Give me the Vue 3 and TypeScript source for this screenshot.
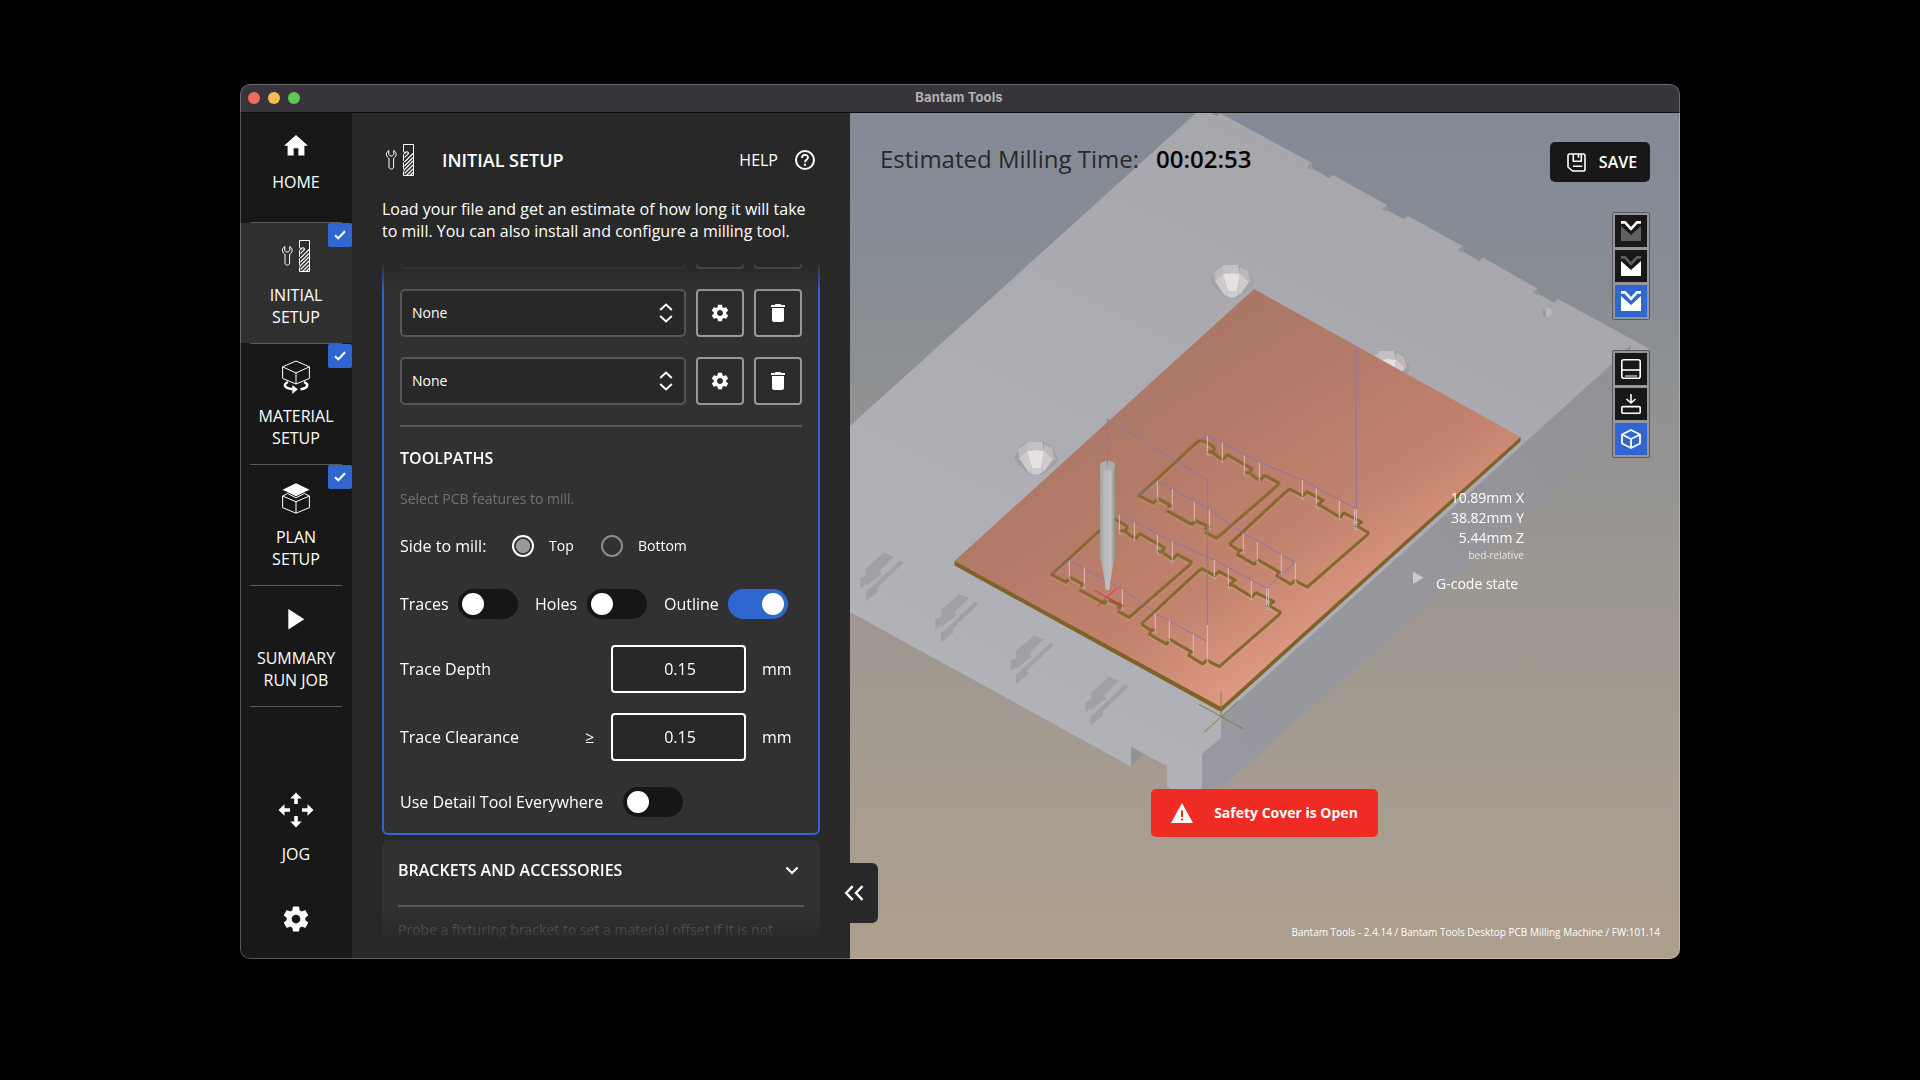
<script setup lang="ts">
import { ref } from 'vue'

interface NavItem {
  id: string
  lines: string[]
  done: boolean
}

const navItems: NavItem[] = [
  { id: 'home', lines: ['HOME'], done: false },
  { id: 'initial', lines: ['INITIAL', 'SETUP'], done: true },
  { id: 'material', lines: ['MATERIAL', 'SETUP'], done: true },
  { id: 'plan', lines: ['PLAN', 'SETUP'], done: true },
  { id: 'summary', lines: ['SUMMARY', 'RUN JOB'], done: false },
]
const active = ref('initial')

const side = ref<'Top' | 'Bottom'>('Top')
const sides = ['Top', 'Bottom'] as const
const features = ref([
  { label: 'Traces', on: false },
  { label: 'Holes', on: false },
  { label: 'Outline', on: true },
])
const detailEverywhere = ref(false)
const tools = ['', 'None', 'None']
const params = [
  { label: 'Trace Depth', sign: '', value: '0.15' },
  { label: 'Trace Clearance', sign: '≥', value: '0.15' },
]

const gear =
  'M19.43 12.98c.04-.32.07-.64.07-.98s-.03-.66-.07-.98l2.11-1.65c.19-.15.24-.42.12-.64l-2-3.46c-.12-.22-.39-.3-.61-.22l-2.49 1c-.52-.4-1.08-.73-1.69-.98l-.38-2.65C14.46 2.18 14.25 2 14 2h-4c-.25 0-.46.18-.49.42l-.38 2.65c-.61.25-1.17.59-1.69.98l-2.49-1c-.23-.09-.49 0-.61.22l-2 3.46c-.13.22-.07.49.12.64l2.11 1.65c-.04.32-.07.65-.07.98s.03.66.07.98l-2.11 1.65c-.19.15-.24.42-.12.64l2 3.46c.12.22.39.3.61.22l2.49-1c.52.4 1.08.73 1.69.98l.38 2.65c.03.24.24.42.49.42h4c.25 0 .46-.18.49-.42l.38-2.65c.61-.25 1.17-.59 1.69-.98l2.49 1c.23.09.49 0 .61-.22l2-3.46c.12-.22.07-.49-.12-.64l-2.11-1.65zM12 15.5c-1.93 0-3.5-1.57-3.5-3.5s1.57-3.5 3.5-3.5 3.5 1.57 3.5 3.5-1.57 3.5-3.5 3.5z'
const wrench =
  'M4.8 6.5C2.8 7.5 1.8 10 2.8 12 3.5 13.3 4.8 13.6 5 15V23C5 25.8 9.6 25.8 9.6 23V15C9.8 13.6 11.1 13.3 11.8 12 12.8 10 11.8 7.5 9.8 6.5V10.5L8.300 12H6.300L4.800 10.500z'
const drill = 'M19.5 .5h10v31h-10v-4l1-1.500-1-1.500v-6l1-1-1-1v-6l1.500-2-1.500-1z'
const flutes =
  'M20.5 13.500L24.5 9.500C24.5 7 21 7.500 20.5 10M20.500 18L29 9.500M20.500 22L29 13.500M20 26L29 17M20.500 29.500L29 21M22.500 31.500L29 25M26 31.500L29 28.500'

// Retract moves of the tool: x, top y, bottom y
const pins: [number, number, number][] = [
  [502, 77, 135], [547, 97, 157], [613, 136, 195], [658, 157, 215],
  [352, 213, 272], [397, 237, 297], [463, 274, 335], [508, 298, 360],
  [238, 314, 372], [283, 335, 392], [352, 373, 432], [397, 394, 457],
  [88, 452, 510], [133, 473, 535], [202, 540, 575], [247, 537, 600],
  [787, 210, 268], [829, 235, 292], [898, 272, 330], [943, 297, 358], [949, 297, 358],
  [610, 370, 430], [652, 396, 460], [724, 432, 495], [766, 457, 520],
  [523, 450, 508], [565, 474, 536], [634, 512, 570], [680, 535, 598], [686, 535, 598],
  [346, 610, 670], [388, 632, 697], [460, 672, 735], [502, 645, 760],
]
const slots = [0, 1, 2, 3]
</script>

<template>
  <div class="desktop">
    <div class="window">
      <header class="titlebar">
        <div class="lights"><i class="red" /><i class="yellow" /><i class="green" /></div>
        <span>Bantam Tools</span>
      </header>

      <div class="body">
        <nav class="sidebar">
          <button
            v-for="item in navItems"
            :key="item.id"
            class="nav-item"
            :class="{ active: item.id === active, home: item.id === 'home' }"
            @click="active = item.id"
          >
            <svg v-if="item.id === 'home'" class="nav-icon" viewBox="0 0 32 32">
              <path transform="translate(1.6 4.4) scale(1.2)" d="M10 20v-6h4v6h5v-8h3L12 3 2 12h3v8z" fill="#fff" />
            </svg>
            <svg v-else-if="item.id === 'initial'" class="nav-icon" viewBox="0 0 32 32" fill="none" stroke="#fff">
              <path :d="wrench" /><path :d="drill" /><path :d="flutes" stroke-width="1.1" />
            </svg>
            <svg v-else-if="item.id === 'material'" class="nav-icon" viewBox="0 0 32 32" fill="none" stroke="#fff" stroke-linejoin="round">
              <path d="M16 0l13.4 5.8v11.6L16 23 2.6 17.4V5.8zM2.6 5.8L16 12l13.4-6.2M16 12v11" />
              <path d="M8 21.2c-5 1.8-4.5 6 4.5 7M24 21.2c5 1.8 4.5 6-3.5 7" stroke-width="2.4" />
              <path d="M12.3 24l5.5 4.3-5.5 4.7z" fill="#fff" stroke="none" />
            </svg>
            <svg v-else-if="item.id === 'plan'" class="nav-icon" viewBox="0 0 32 32" fill="none" stroke="#fff" stroke-linejoin="round">
              <path d="M16 1.3l13.5 6.4L16 14.3 2.5 7.7z" fill="#fff" stroke="none" />
              <path d="M7.5 11.5L2.6 14v11.6L16 31.2l13.4-5.6V14l-4.9-2.5M2.6 14L16 19.7 29.4 14M16 19.7v11.5M7.5 11.5L16 15.8l8.5-4.3" />
            </svg>
            <svg v-else class="nav-icon" viewBox="0 0 32 32"><path d="M8.3 6l16 10.2-16 10.2z" fill="#fff" /></svg>
            <span class="nav-label"><span v-for="line in item.lines" :key="line">{{ line }}</span></span>
            <span v-if="item.done" class="badge">
              <svg width="12" height="10" viewBox="0 0 12 10"><path d="M1 5.2l3.3 3.1L11 1.3" fill="none" stroke="#fff" stroke-width="2" /></svg>
            </span>
          </button>
          <div class="nav-foot">
            <svg width="36" height="36" viewBox="-18 -18 36 36" fill="#fff">
              <path v-for="a in [0, 90, 180, 270]" :key="a" :transform="`rotate(${a})`" d="M0-17.5L5.7-11.5H1.8V-6H-1.8V-11.5H-5.7z" />
            </svg>
            <span class="jog">JOG</span>
            <svg class="settings" width="30" height="30" viewBox="0 0 24 24"><path :d="gear" fill="#fff" /></svg>
          </div>
        </nav>

        <section class="panel">
          <div class="panel-head">
            <svg class="head-icon" width="32" height="32" viewBox="0 0 32 32" fill="none" stroke="#fff">
              <path :d="wrench" /><path :d="drill" /><path :d="flutes" stroke-width="1.1" />
            </svg>
            <h1>INITIAL SETUP</h1>
            <span class="help">HELP</span>
            <svg width="20" height="20" viewBox="0 0 20 20" fill="none" stroke="#fff" stroke-width="2">
              <circle cx="10" cy="10" r="9" />
              <path d="M7 8c0-4 6-4 6-.5 0 2.2-3 2.3-3 4.8" stroke-width="1.8" /><path d="M10 13.7v2" />
            </svg>
          </div>
          <p class="intro">Load your file and get an estimate of how long it will take<br />to mill. You can also install and configure a milling tool.</p>

          <div class="scroller">
            <div class="card selected">
              <div v-for="(tool, i) in tools" :key="i" class="tool-row">
                <div class="select">
                  <span>{{ tool }}</span>
                  <svg width="14" height="20" viewBox="0 0 14 20" fill="none" stroke="#fff" stroke-width="2"><path d="M1.2 7L7 1.6 12.8 7M1.2 13L7 18.4l5.8-5.4" /></svg>
                </div>
                <button class="square"><svg width="20" height="20" viewBox="0 0 24 24"><path :d="gear" fill="#fff" /></svg></button>
                <button class="square"><svg width="24" height="24" viewBox="0 0 24 24" fill="#fff"><path d="M6 19c0 1.1.9 2 2 2h8c1.1 0 2-.9 2-2V7H6v12zM19 4h-3.5l-1-1h-5l-1 1H5v2h14V4z" /></svg></button>
              </div>
              <div class="rule" />
              <h2>TOOLPATHS</h2>
              <p class="hint">Select PCB features to mill.</p>
              <div class="side-row">
                <span class="side-label">Side to mill:</span>
                <label v-for="s in sides" :key="s" class="radio" @click="side = s">
                  <i :class="{ on: side === s }" /><span>{{ s }}</span>
                </label>
              </div>
              <div class="feature-row">
                <template v-for="f in features" :key="f.label">
                  <span>{{ f.label }}</span>
                  <button class="toggle" :class="{ on: f.on }" @click="f.on = !f.on"><i /></button>
                </template>
              </div>
              <div v-for="p in params" :key="p.label" class="param-row">
                <span class="param-label">{{ p.label }}</span>
                <span class="sign">{{ p.sign }}</span>
                <div class="number">{{ p.value }}</div>
                <span>mm</span>
              </div>
              <div class="detail-row">
                <span>Use Detail Tool Everywhere</span>
                <button class="toggle" :class="{ on: detailEverywhere }" @click="detailEverywhere = !detailEverywhere"><i /></button>
              </div>
            </div>
            <div class="card brackets">
              <div class="bracket-head">
                <h2>BRACKETS AND ACCESSORIES</h2>
                <svg width="14" height="9" viewBox="0 0 14 9"><path d="M1.4 1.5L7 7l5.6-5.5" fill="none" stroke="#fff" stroke-width="2" /></svg>
              </div>
              <div class="rule" />
              <p class="hint">Probe a fixturing bracket to set a material offset if it is not</p>
            </div>
          </div>
        </section>

        <main class="viewport">
          <svg class="scene" viewBox="850 113 830 846">
            <defs>
              <linearGradient id="sky" x1="0" y1="0" x2="0" y2="1">
                <stop offset="0" stop-color="#828a96" /><stop offset=".2" stop-color="#878d94" />
                <stop offset=".42" stop-color="#959493" /><stop offset=".55" stop-color="#9c9791" /><stop offset=".8" stop-color="#a69c90" />
                <stop offset="1" stop-color="#ad9f8c" />
              </linearGradient>
              <linearGradient id="bed" gradientUnits="userSpaceOnUse" x1="1350" y1="150" x2="1050" y2="760">
                <stop offset="0" stop-color="#a6a6ab" /><stop offset="1" stop-color="#b2b2b9" />
              </linearGradient>
              <linearGradient id="flank" gradientUnits="userSpaceOnUse" x1="1620" y1="370" x2="1210" y2="770">
                <stop offset="0" stop-color="#919196" /><stop offset=".5" stop-color="#96969c" /><stop offset="1" stop-color="#9898a0" />
              </linearGradient>
              <linearGradient id="copper" gradientUnits="userSpaceOnUse" x1="1150" y1="350" x2="1330" y2="640">
                <stop offset="0" stop-color="#a97767" /><stop offset=".35" stop-color="#b57b69" />
                <stop offset=".7" stop-color="#c3836e" /><stop offset="1" stop-color="#df9a84" />
              </linearGradient>
              <linearGradient id="steel" x1="0" y1="0" x2="1" y2="0">
                <stop offset="0" stop-color="#a0a0a0" /><stop offset=".3" stop-color="#b8b8b8" />
                <stop offset=".7" stop-color="#c0c0c0" /><stop offset="1" stop-color="#8f8f8f" />
              </linearGradient>
              <g id="peg">
                <path d="M-22 0l6-12 8-4H7l9 5 6 11-1 5-13 11-8 1-8-2-12-11z" fill="#a2a2a6" />
                <path d="M-9-16H6l2 9-8-1-9 1z" fill="#c2c2c4" />
                <path d="M-18-9l9-6v8l-8 7zM8-14l8 4 3 12-11-8z" fill="#bababd" />
                <path d="M-17 0l8-7 5 17-3 5z" fill="#cdcacb" />
                <path d="M-9-7l9-1 8 1-3 17h-9z" fill="#e6e0e0" />
                <path d="M8-7L17 1 8 14l-3-4z" fill="#cfcbcc" />
                <path d="M-4 10h9l2 4-5 2.500h-4l-4-2z" fill="#cfcdce" />
              </g>
              <g id="partA">
                <path d="M503 126H516M524 112L500 97 482 91 472 96 297 257 340 279 354 266 397 289M382 289h15M380 302L455 343 466 332 508 350M492 356h16M495 366L530 385 714 225 716 219 680 199 672 197 660 212 631 192M613 188h15L635 176 562 134 548 150 518 128 524 112" />
              </g>
              <g id="partC">
                <path d="M596 421h14M568 403L594 420M568 403L735 248 750 237 788 258 800 245 850 271 830 286H844M843 287L900 322 912 309 965 336 945 350H958M955 350L985 368 980 376 802 531 765 512 752 523 707 495M709 489H725M724 490L655 450 643 463 593 434 597 420" />
              </g>
            </defs>
            <rect x="850" y="113" width="830" height="846" fill="url(#sky)" />

            <path d="M1650 349L1650 397 1577 470 1410 620 1221 788 1190 789 1202 754 1221 738V712L1613 363z" fill="url(#flank)" />
            <path d="M850 426L1196 113H1211L1216.5 116 1220 113 1312 163V168L1329 178 1333 175 1387 205V210L1403.5 219 1408 216 1462.6 246V251L1479 261 1483 257.5 1537.5 288.5V293.5L1554 302.5 1558 299 1650 349 1613 363 1221 717V738L1202 754V789H1171L1167 786.5V766L1131 746.5V766.5L850 612z" fill="url(#bed)" />
            <path d="M1131 746.5V766.5L1143.5 754zM1311.5 163V170L1307 167zM1387 205V212L1382 209zM1462.5 246V253L1458 250zM1537.5 288.5V295.5L1533 292.5zM1631 345V353L1623 351z" fill="#92929a" />

            <g transform="translate(850 380) scale(.41455 .33333)">
              <g v-for="n in slots" :key="n" :transform="`translate(${-181 * n} ${-124 * n})`" fill="#a0a0a7">
                <path d="M625 890L649 902 614 944 618 956 581 990 581 984 568 997V965L581 960V938z" />
                <path d="M664 912L672 920 609 995 611 1007 581 1036V1008L592 997z" />
              </g>
            </g>

            <use href="#peg" x="1232" y="281" />
            <use href="#peg" x="1036" y="458" />
            <use href="#peg" x="1388" y="367" />
            <circle cx="1547.5" cy="312.5" r="4.7" fill="#b9b9bc" /><path d="M1542 309.5h4v7.500h-3z" fill="#9c9ca0" />

            <path d="M954.5 561V565.5L1221 712 1520.5 441.5V437z" fill="#7f6228" />
            <path d="M1254 289L1520.5 437 1221 707 954.5 561z" fill="url(#copper)" />

            <g transform="translate(1040 410) scale(.333333)" fill="none" stroke-linejoin="round">
              <g stroke="#d9b0a0" stroke-width="2.6" opacity=".5" transform="translate(0 9)">
                <use href="#partA" /><use href="#partA" transform="translate(-262 237)" />
                <use href="#partC" /><use href="#partC" transform="translate(-264 239)" />
              </g>
              <g stroke="#86682c" stroke-width="9">
                <use href="#partA" /><use href="#partA" transform="translate(-262 237)" />
                <use href="#partC" /><use href="#partC" transform="translate(-264 239)" />
              </g>
              <path
                d="M202 165V27L502 210V645M482 91L502 77 658 157 787 210 949 297V-190M297 257L352 213 508 298 610 370 766 457 680 535 523 450 397 394 238 314 222 328M37 493L88 452 247 537 346 610 502 695"
                stroke="#8674b4" stroke-width="2.8"
              />
              <g v-for="(p, i) in pins" :key="i" stroke-width="3">
                <path :d="`M${p[0]} ${p[1]}V${p[2]}`" stroke="#dcc0b8" />
                <path :d="`M${p[0]} ${p[2] - 10}v8`" stroke="#75718c" />
                <path :d="`M${p[0] - 3} ${p[2] - 6}h5v6`" stroke="#b8b6ae" />
              </g>
              <path d="M180 167V440L188 480 193 505 197 540H208L212 505 217 480 225 440V167z" fill="url(#steel)" />
              <ellipse cx="202.5" cy="167" rx="22.5" ry="15" fill="#acacac" />
              <path d="M202 150V166M202 540v35" stroke="#8674b4" stroke-width="2.6" />
              <path d="M163 541L250 588M231 534L173 588" stroke="#d8372c" stroke-width="3" />
            </g>
            <g transform="translate(850 380) scale(.41455 .33333)" stroke="#7c7a3b" stroke-width="2.4">
              <path d="M895 935V1010M842 973L948 1046M937 963L853 1058" />
            </g>
            <path d="M1413 571.5v12.500l10.5-6.300z" fill="#c9c9c9" />
          </svg>

          <div class="estimate"><span>Estimated Milling Time:</span><b>00:02:53</b></div>

          <button class="save">
            <svg width="19" height="19" viewBox="0 0 19 19" fill="none" stroke="#fff" stroke-width="1.6" stroke-linejoin="round">
              <path d="M2.8 1H16.2C17.2 1 18 1.8 18 2.8V16.2C18 17.2 17.2 18 16.2 18H5.5L1 14V2.8C1 1.8 1.8 1 2.8 1z" /><path d="M6.3 1v7.200h8V1M11.5 1v3.800M6 13.300h9.300" />
            </svg>
            <span>SAVE</span>
          </button>

          <div class="tools">
            <div class="tool-group">
              <button v-for="n in 3" :key="n" :class="{ on: n === 3 }">
                <svg width="20" height="20" viewBox="0 0 20 20">
                  <path d="M0 5L10 14 20 5V20H0z" :fill="n === 1 ? '#606060' : '#fff'" />
                  <path d="M0 1.4H4L10 7.9 16 1.4H20" fill="none" :stroke="n === 3 ? '#3066d0' : '#181818'" stroke-width="6" />
                  <path d="M0 1.4H4L10 7.9 16 1.4H20" fill="none" :stroke="n === 2 ? '#606060' : '#fff'" stroke-width="2.6" />
                </svg>
              </button>
            </div>
            <div class="tool-group">
              <button>
                <svg width="20" height="20" viewBox="0 0 20 20" fill="none" stroke="#fff" stroke-width="1.6"><rect x=".8" y=".8" width="18.4" height="18.4" rx="2" /><path d="M1 11h18" /><path d="M4 17h12" stroke-width="1" /></svg>
              </button>
              <button>
                <svg width="20" height="20" viewBox="0 0 20 20" fill="none" stroke="#fff" stroke-width="1.6"><path d="M10 0v9M5.5 5L10 9l4.5-4" /><rect x=".8" y="12.6" width="18.4" height="6.6" rx="1" /></svg>
              </button>
              <button class="on">
                <svg width="20" height="20" viewBox="0 0 20 20" fill="none" stroke="#fff" stroke-width="1.8" stroke-linejoin="round"><path d="M10 1l9 4.500v9L10 19l-9-4.500v-9zM1 5.500L10 10l9-4.500M10 10v9" /></svg>
              </button>
            </div>
          </div>

          <div class="coords">
            <span>10.89mm X</span><span>38.82mm Y</span><span>5.44mm Z</span><small>bed-relative</small>
          </div>
          <div class="gcode">G-code state</div>

          <div class="alert">
            <svg width="22" height="20" viewBox="0 0 22 20"><path d="M11 0l11 20H0z" fill="#fff" /><path d="M11 7.500v6.500M11 15.500v2" stroke="#ee2c24" stroke-width="2" /></svg>
            <span>Safety Cover is Open</span>
          </div>
          <div class="version">Bantam Tools - 2.4.14 / Bantam Tools Desktop PCB Milling Machine / FW:101.14</div>
          <button class="collapse">
            <svg width="20" height="16" viewBox="0 0 20 16" fill="none" stroke="#fff" stroke-width="2.4"><path d="M8.7 1.200L2.200 8l6.500 6.800M18.500 1.200L12 8l6.500 6.800" /></svg>
          </button>
        </main>
      </div>
    </div>
  </div>
</template>

<style>
body { background: #000; }
</style>

<style scoped>
.desktop { box-sizing: border-box; width: 1920px; height: 1080px; padding: 84px 240px 0; background: #000; color: #fff; font: 16px/22px "Open Sans", "Noto Sans", sans-serif; overflow: hidden; }
.desktop * { box-sizing: border-box; }
button { font: inherit; color: inherit; border: 0; padding: 0; background: none; display: flex; align-items: center; justify-content: center; }
h1, h2, p { margin: 0; }
svg { display: block; flex: none; }
.window { position: relative; width: 1440px; height: 875px; border-radius: 10px; overflow: hidden; display: flex; flex-direction: column; background: #282828; }
.window::after { content: ""; position: absolute; inset: 0; border: 1px solid rgba(255, 255, 255, .28); border-radius: 10px; pointer-events: none; }
.titlebar { height: 29px; flex: none; background: #38343b; border-bottom: 1px solid #0c0c0c; display: flex; align-items: center; justify-content: center; position: relative; font: 700 13px/16px Inter, sans-serif; letter-spacing: .12px; color: #b4b1b6; }
.titlebar span { transform: translate(-1px, -1px); }
.lights { position: absolute; left: 8px; top: 8px; display: flex; gap: 8px; }
.lights i { width: 12px; height: 12px; border-radius: 50%; }
.red { background: #ed6b60; }
.yellow { background: #f5be4f; }
.green { background: #62c655; }
.body { flex: 1; display: flex; min-height: 0; }

.sidebar { width: 112px; flex: none; background: #181818; display: flex; flex-direction: column; }
.nav-item { position: relative; width: 112px; height: 121px; padding-top: 17px; flex-direction: column; justify-content: flex-start; gap: 12px; }
.nav-item.home { height: 110px; padding-top: 14px; }
.nav-item.active { background: linear-gradient(#303030 120px, transparent 120px); }
.nav-item::after { content: ""; position: absolute; left: 10px; bottom: 0; width: 92px; height: 1px; background: #5a5a5a; }
.nav-icon { width: 32px; height: 32px; overflow: visible; }
.nav-label { display: flex; flex-direction: column; align-items: center; }
.badge { position: absolute; right: 0; top: 0; width: 24px; height: 24px; border-radius: 2px; background: #3066d0; display: flex; align-items: center; justify-content: center; }
.nav-foot { display: flex; flex-direction: column; align-items: center; padding-top: 85px; }
.jog { margin-top: 15px; }
.settings { margin-top: 39px; }

.panel { width: 498px; flex: none; padding: 31px 30px 16px; background: #282828; display: flex; flex-direction: column; }
.panel-head { height: 32px; display: flex; align-items: center; padding-right: 5px; }
.head-icon { margin-left: 2px; }
h1 { font-size: 18px; line-height: 24px; font-weight: 600; margin-left: 26px; flex: 1; }
.help { margin-right: 17px; }
.intro { margin-top: 22px; white-space: nowrap; }
.scroller { margin-top: 20px; height: 681px; overflow: hidden; -webkit-mask-image: linear-gradient(transparent 0, rgba(0, 0, 0, .2) 4px, #000 30px, #000 650px, transparent 682px); mask-image: linear-gradient(transparent 0, rgba(0, 0, 0, .2) 4px, #000 30px, #000 650px, transparent 682px); }
.card { width: 438px; background: #313131; border-radius: 6px; }
.selected { margin-top: -60px; border: 2px solid #3066d0; padding: 17px 16px 16px; }
.tool-row { display: flex; gap: 10px; margin-bottom: 20px; }
.select { width: 286px; height: 48px; border: 2px solid #565656; border-radius: 5px; background: #282828; display: flex; align-items: center; justify-content: space-between; padding: 0 11px 0 10px; font-size: 14px; }
.square { width: 48px; height: 48px; border: 2px solid #989898; border-radius: 4px; background: #2b2b2b; }
.rule { height: 2px; background: #575757; }
h2 { font-size: 16px; line-height: 22px; font-weight: 600; }
.selected h2 { margin-top: 20px; }
.hint { font-size: 14px; color: #727272; white-space: nowrap; }
.selected .hint { margin-top: 19px; }
.side-row { margin-top: 25px; height: 22px; display: flex; align-items: center; }
.side-label { width: 112px; }
.radio { display: flex; align-items: center; gap: 15px; width: 89px; font-size: 14px; }
.radio i { width: 22px; height: 22px; flex: none; border-radius: 50%; border: 2px solid #8c8c8c; }
.radio i.on { border-color: #fff; background: radial-gradient(circle, #999 6.7px, #313131 7.4px); }
.feature-row { margin-top: 32px; display: grid; grid-template-columns: 58px 77px 52px 77px 64px 60px; align-items: center; }
.toggle { width: 60px; height: 30px; border-radius: 15px; background: #161616; padding: 0 4px; justify-content: flex-start; }
.toggle i { width: 22px; height: 22px; border-radius: 50%; background: #fff; }
.toggle.on { background: #3066d0; justify-content: flex-end; }
.param-row { margin-top: 20px; display: flex; align-items: center; height: 48px; }
.feature-row + .param-row { margin-top: 26px; }
.param-label { width: 185px; }
.sign { width: 26px; }
.number { width: 135px; height: 48px; border: 2px solid #fff; border-radius: 4px; background: #282828; margin-right: 16px; display: flex; align-items: center; justify-content: center; padding-left: 3px; }
.detail-row { margin-top: 26px; height: 30px; display: grid; grid-template-columns: 223px 60px; align-items: center; white-space: nowrap; }
.brackets { margin-top: 5px; padding: 19px 16px 20px; height: 160px; }
.bracket-head { display: flex; align-items: center; justify-content: space-between; padding-right: 5px; margin-bottom: 24px; }
.brackets .hint { margin-top: 12px; }

.viewport { position: relative; width: 830px; flex: none; }
.scene { width: 830px; height: 846px; }
.estimate { position: absolute; left: 30px; top: 30px; font-size: 24px; line-height: 32px; color: #27292c; display: flex; gap: 17px; white-space: nowrap; }
.estimate b { font-weight: 600; color: #000; }
.save { position: absolute; right: 30px; top: 29px; width: 100px; height: 40px; border-radius: 5px; background: #181818; font-weight: 600; gap: 13px; padding-left: 4px; }
.tools { position: absolute; right: 30px; top: 99px; display: flex; flex-direction: column; gap: 30px; }
.tool-group { border: 1px solid #5a5a5c; border-radius: 2px; padding: 2px; background: #96969a; display: flex; flex-direction: column; gap: 3px; }
.tool-group button { width: 32px; height: 32px; background: #181818; }
.tool-group button.on { background: #3066d0; }
.coords { position: absolute; right: 156px; top: 375px; display: flex; flex-direction: column; align-items: flex-end; font-size: 14px; line-height: 20px; }
.coords small { font-size: 10px; line-height: 14px; color: #e6e6e6; }
.gcode { position: absolute; left: 586px; top: 461px; font-size: 14px; line-height: 20px; white-space: nowrap; }
.alert { position: absolute; left: 301px; top: 676px; width: 227px; height: 48px; border-radius: 5px; background: #ee2c24; display: flex; align-items: center; justify-content: center; gap: 21px; font-size: 14px; font-weight: 700; white-space: nowrap; }
.version { position: absolute; right: 20px; bottom: 17px; font-size: 10px; line-height: 20px; white-space: nowrap; }
.collapse { position: absolute; left: 0; top: 750px; width: 28px; height: 60px; background: #282828; border-radius: 0 6px 6px 0; }
.collapse svg { transform: translateX(-10px); }
</style>
